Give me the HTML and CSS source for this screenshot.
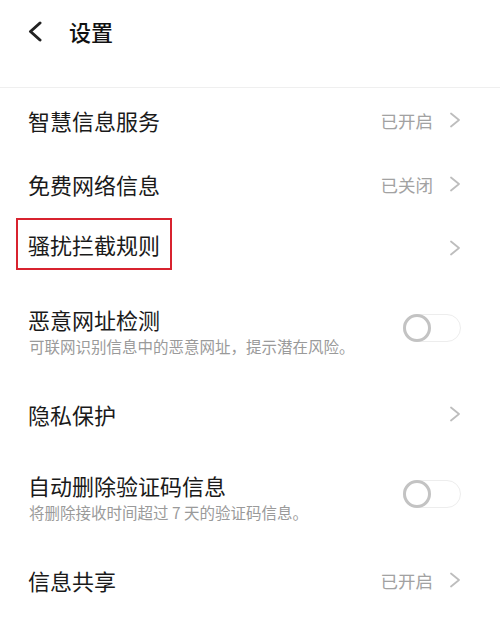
FILE: index.html
```html
<!DOCTYPE html>
<html lang="zh-CN">
<head>
<meta charset="utf-8">
<link rel="stylesheet" href="styles.css">
</head>
<body>
<div class="page">
  <header class="header">
    <svg class="back" width="16" height="22" viewBox="0 0 16 22"><path d="M13 2 L3.5 10.5 L13 19" fill="none" stroke="#222" stroke-width="3" stroke-linecap="round" stroke-linejoin="round"/></svg>
    <span class="htitle">设置</span>
  </header>
  <div class="list">
    <div class="row">
      <span class="title">智慧信息服务</span>
      <span class="right"><span class="value">已开启</span><svg class="chev" width="12" height="16" viewBox="0 0 12 16"><path d="M2 1.5 L10 8 L2 14.5" fill="none" stroke="#bdbdbd" stroke-width="1.8" stroke-linecap="round" stroke-linejoin="round"/></svg></span>
    </div>
    <div class="row">
      <span class="title">免费网络信息</span>
      <span class="right"><span class="value">已关闭</span><svg class="chev" width="12" height="16" viewBox="0 0 12 16"><path d="M2 1.5 L10 8 L2 14.5" fill="none" stroke="#bdbdbd" stroke-width="1.8" stroke-linecap="round" stroke-linejoin="round"/></svg></span>
    </div>
    <div class="row">
      <span class="title boxed">骚扰拦截规则</span>
      <span class="right"><svg class="chev" width="12" height="16" viewBox="0 0 12 16"><path d="M2 1.5 L10 8 L2 14.5" fill="none" stroke="#bdbdbd" stroke-width="1.8" stroke-linecap="round" stroke-linejoin="round"/></svg></span>
    </div>
    <div class="row tall">
      <div class="texts">
        <span class="title">恶意网址检测</span>
        <span class="sub">可联网识别信息中的恶意网址，提示潜在风险。</span>
      </div>
      <span class="toggle"><span class="knob"></span></span>
    </div>
    <div class="row">
      <span class="title">隐私保护</span>
      <span class="right"><svg class="chev" width="12" height="16" viewBox="0 0 12 16"><path d="M2 1.5 L10 8 L2 14.5" fill="none" stroke="#bdbdbd" stroke-width="1.8" stroke-linecap="round" stroke-linejoin="round"/></svg></span>
    </div>
    <div class="row tall">
      <div class="texts">
        <span class="title">自动删除验证码信息</span>
        <span class="sub">将删除接收时间超过 7 天的验证码信息。</span>
      </div>
      <span class="toggle"><span class="knob"></span></span>
    </div>
    <div class="row">
      <span class="title">信息共享</span>
      <span class="right"><span class="value">已开启</span><svg class="chev" width="12" height="16" viewBox="0 0 12 16"><path d="M2 1.5 L10 8 L2 14.5" fill="none" stroke="#bdbdbd" stroke-width="1.8" stroke-linecap="round" stroke-linejoin="round"/></svg></span>
    </div>
  </div>
</div>
</body>
</html>
```

FILE: styles.css
```css
* { box-sizing: border-box; }
html, body { margin: 0; padding: 0; background: #fff; }
body {
  font-family: "Noto Sans CJK SC", "Noto Sans", sans-serif;
  color: #1c1c1c;
}
.page { width: 500px; }
.header {
  height: 88px;
  display: flex;
  align-items: flex-start;
  padding: 18px 0 0 27px;
  border-bottom: 1px solid #efefef;
}
.back { display: block; margin-top: 3px; }
.htitle {
  margin-left: 26px;
  font-size: 22px;
  line-height: 26px;
  font-weight: 500;
  color: #111;
}
.list { display: flex; flex-direction: column; }
.row {
  height: 64px;
  display: flex;
  align-items: center;
  justify-content: space-between;
  padding: 0 39px 0 28px;
}
.row.tall { height: 102px; }
.title {
  font-size: 22px;
  line-height: 28px;
  color: #1a1a1a;
}
.boxed {
  outline: 2.5px solid #d8232f;
  outline-offset: 10px;
  position: relative;
  top: -4px;
}
.texts { display: flex; flex-direction: column; }
.sub {
  font-size: 15.5px;
  line-height: 22px;
  color: #9a9a9a;
  margin-top: 2px;
  padding-left: 1px;
}
.right { display: flex; align-items: center; }
.value {
  font-size: 17.5px;
  color: #a2a2a2;
  margin-right: 16px;
}
.chev { display: block; }
.toggle {
  width: 58px;
  height: 28px;
  border-radius: 14px;
  border: 1.5px solid #ededed;
  background: #fff;
  position: relative;
  margin-right: 0;
  margin-top: -6px;
}
.knob {
  position: absolute;
  left: -1.5px;
  top: -1.5px;
  width: 28px;
  height: 28px;
  border-radius: 50%;
  border: 3.5px solid #c3c3c3;
  background: #fff;
}
```
